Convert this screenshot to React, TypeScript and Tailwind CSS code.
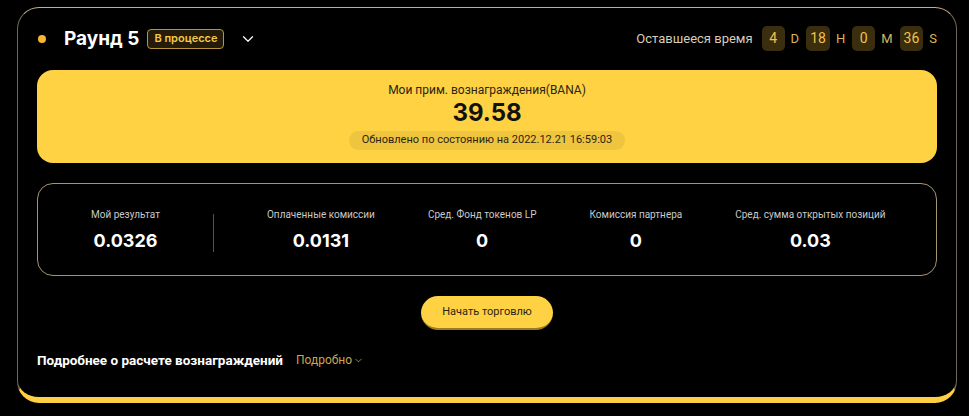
import { ChevronDown } from "lucide-react";

const STATS = [
  { label: "Оплаченные комиссии", value: "0.0131" },
  { label: "Сред. Фонд токенов LP", value: "0" },
  { label: "Комиссия партнера", value: "0" },
  { label: "Сред. сумма открытых позиций", value: "0.03" },
];

const TIMER = [
  { num: "4", unit: "D" },
  { num: "18", unit: "H" },
  { num: "0", unit: "M" },
  { num: "36", unit: "S" },
];

function Stat({ label, value }: { label: string; value: string }) {
  return (
    <div className="flex flex-col items-center shrink-0">
      <span className="text-[10px] leading-[14px] text-[#c9c9c9] font-['Roboto',sans-serif] whitespace-nowrap">{label}</span>
      <span className="mt-[7px] text-[18px] leading-[24px] font-bold text-white font-['Inter',sans-serif]">{value}</span>
    </div>
  );
}

export default function App() {
  return (
    <div className="w-[969px] h-[416px] bg-black pt-[7px] pl-[17px] font-['Inter',sans-serif] overflow-hidden">
      <div className="w-[940px] h-[396px] rounded-[22px] border border-[#6f6656] border-t-[#c4ae86] border-b-[6px] border-b-[#ffd043] bg-black px-[19px] pt-[18px]">
        {/* Header */}
        <div className="flex items-center h-[25px]">
          <span className="w-[8px] h-[8px] rounded-full bg-[#f7b530] ml-[1px]" />
          <span className="ml-[18px] text-[19px] font-bold text-white leading-none">Раунд 5</span>
          <span className="ml-[8px] h-[20px] px-[6px] flex items-center rounded-[4px] border border-[#b8953a] bg-[#241c08] text-[11px] font-semibold text-[#f4c94a]">
            В процессе
          </span>
          <ChevronDown className="ml-[15px] text-white" size={18} strokeWidth={1.6} />
          <div className="ml-auto flex items-center text-[13px] text-[#d6ceb9] font-['Roboto',sans-serif]">
            <span className="mr-[9px]">Оставшееся время</span>
            {TIMER.map((t, i) => (
              <div key={t.unit} className="flex items-center">
                <span className="h-[25px] min-w-[23px] px-[4px] flex items-center justify-center rounded-[5px] bg-[#3a2e0e] text-[14px] text-[#f2c14c]">
                  {t.num}
                </span>
                <span className={`ml-[6px] text-[#d9b65a] ${i < TIMER.length - 1 ? "mr-[7px]" : ""}`}>{t.unit}</span>
              </div>
            ))}
          </div>
        </div>

        {/* Rewards panel */}
        <div className="mt-[19px] h-[93px] rounded-[16px] bg-[#fed243] flex flex-col items-center pt-[12px] font-['Roboto',sans-serif]">
          <span className="text-[12px] leading-[16px] text-[#2b2412]">Мои прим. вознаграждения(BANA)</span>
          <span className="mt-[1px] text-[24px] leading-[28px] font-bold text-[#111] font-['Inter',sans-serif]">39.58</span>
          <span className="mt-[4px] h-[19px] px-[13px] flex items-center rounded-full bg-[#efc53f] text-[11px] text-[#2b2412]">
            Обновлено по состоянию на 2022.12.21 16:59:03
          </span>
        </div>

        {/* Stats */}
        <div className="mt-[20px] h-[93px] rounded-[16px] border border-[#a89371] flex items-center px-[53px] gap-[53px] pt-[2px]">
          <Stat label="Мой результат" value="0.0326" />
          <div className="w-px shrink-0 h-[38px] bg-[#55524c] mt-[4px]" />
          {STATS.map((s) => (
            <Stat key={s.label} label={s.label} value={s.value} />
          ))}
        </div>

        {/* Action */}
        <div className="mt-[20px] flex justify-center">
          <button className="w-[132px] h-[34px] rounded-full bg-[#fed243] border-b-[2px] border-b-[#9c7c1e] text-[11px] text-[#2b2412] font-['Roboto',sans-serif]">
            Начать торговлю
          </button>
        </div>

        <div className="mt-[20px] flex items-center font-['Roboto',sans-serif]">
          <span className="text-[13.5px] font-bold text-white">Подробнее о расчете вознаграждений</span>
          <span className="ml-[13px] flex items-center text-[12px] text-[#c9a654]">
            Подробно
            <ChevronDown size={11} strokeWidth={1.6} className="ml-[1px]" />
          </span>
        </div>
      </div>
    </div>
  );
}
